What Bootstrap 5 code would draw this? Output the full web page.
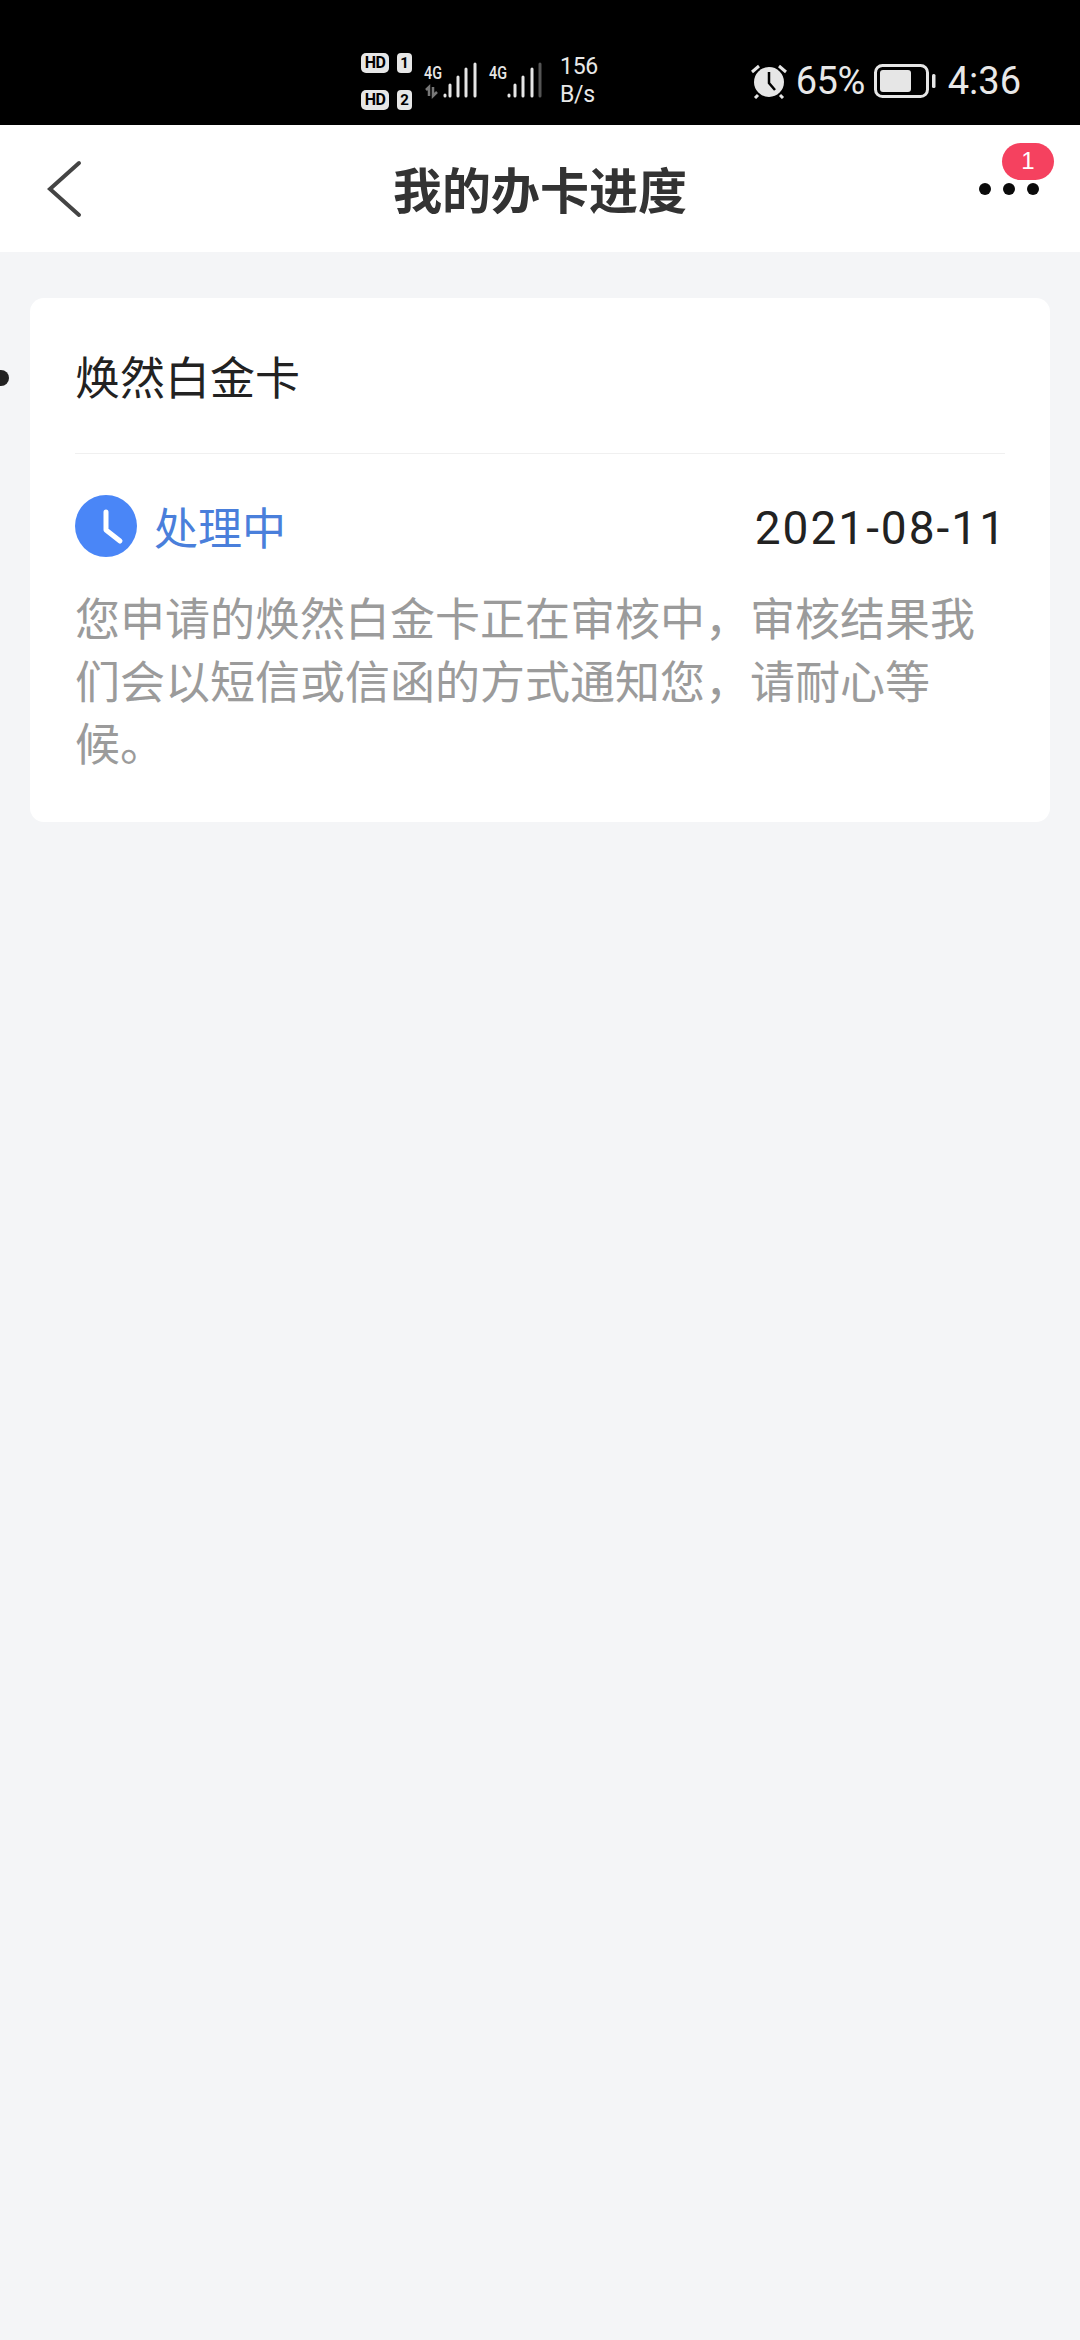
<!DOCTYPE html>
<html lang="zh-CN">
<head>
  <meta charset="UTF-8" />
  <title>我的办卡进度</title>
  <link href="https://cdn.jsdelivr.net/npm/bootstrap@5.3.3/dist/css/bootstrap.min.css" rel="stylesheet">
  <style>
    html, body { height: 100%; }
    body { background: #f4f5f7; font-family: "Noto Sans CJK SC", "Liberation Sans", sans-serif; overflow: hidden; position: relative; }
    .status-bar { height: 125px; background: #000; color: #e8e8e8; padding: 37px 59px 0 361px; font-family: "Roboto", "Liberation Sans", sans-serif; }
    .sim-col { width: 51px; height: 57px; }
    .hd-tag { width: 29px; height: 20px; background: #e6e6e6; color: #000; border-radius: 5px; font-size: 16px; font-weight: 700; line-height: 20px; text-align: center; letter-spacing: -.5px; }
    .sim-no { width: 15px; height: 20px; background: #e6e6e6; color: #000; border-radius: 4px; font-size: 15px; font-weight: 700; line-height: 20px; text-align: center; }
    .net-speed { font-size: 23px; line-height: 28px; width: 42px; margin-left: 10px; letter-spacing: -.3px; }
    .batt-pct { font-size: 38px; letter-spacing: -.5px; margin-left: 8px; margin-right: 9px; }
    .clock-txt { font-size: 38px; margin-left: 12px; }
    .head-bar { height: 127px; background: #fff; position: relative; }
    .head-title { font-size: 49px; font-weight: 700; color: #333; line-height: 1; margin-top: -2px; }
    .back-btn { position: absolute; left: 47px; top: 35px; }
    .more-dots { position: absolute; left: 979px; top: 58px; width: 60px; }
    .more-dots span { width: 12px; height: 12px; background: #0b0b0b; border-radius: 50%; }
    .msg-count { position: absolute; left: 1002px; top: 18px; width: 52px; height: 37px; background: #f5415f; color: #fff; border-radius: 19px; font-family: "Liberation Sans", sans-serif; font-size: 24px; line-height: 36px; text-align: center; }
    .side-dot { position: absolute; left: -7px; top: 370px; width: 16px; height: 16px; background: #222; border-radius: 50%; }
    .prog-card { margin: 46px 30px 0; background: #fff; border: 0; border-radius: 14px; height: 524px; padding: 0 45px; }
    .prog-name { height: 156px; border-bottom: 1px solid #f0f0f0; font-size: 45px; color: #222; line-height: 1; padding-top: 55px; }
    .prog-state { margin-top: 41px; height: 62px; }
    .state-txt { font-size: 44px; color: #4a7fdb; margin-left: 17px; line-height: 1; }
    .state-date { font-size: 46px; color: #222; line-height: 1; font-family: "Roboto", "Liberation Sans", sans-serif; letter-spacing: 2px; margin-right: -2px; padding-top: 3px; }
    .prog-desc { margin-top: 29px; font-size: 45px; line-height: 62.5px; color: #9b9b9b; margin-right: 10px; }
  </style>
</head>
<body>
  <div class="status-bar d-flex align-items-center">
    <div class="sim-col d-flex flex-column justify-content-between">
      <div class="d-flex gap-2"><div class="hd-tag">HD</div><div class="sim-no">1</div></div>
      <div class="d-flex gap-2"><div class="hd-tag">HD</div><div class="sim-no">2</div></div>
    </div>
    <svg width="130" height="40" viewBox="0 0 130 40" class="ms-2">
      <text x="4" y="18" font-family="Roboto, sans-serif" font-size="18" font-weight="500" fill="#e6e6e6" textLength="18" lengthAdjust="spacingAndGlyphs">4G</text>
      <text x="69" y="18" font-family="Roboto, sans-serif" font-size="18" font-weight="500" fill="#e6e6e6" textLength="18" lengthAdjust="spacingAndGlyphs">4G</text>
      <path d="M9 35V26l-3 3M13 26v9l4-4" fill="none" stroke="#777" stroke-width="2.5"/>
      <g stroke="#e6e6e6" stroke-width="3" stroke-linecap="round">
        <path d="M25 34v1M30 35V24M38 35V16M46 35V8M55 35V3"/>
        <path d="M89 34v1M95 35V24M103 35V16M112 35V8"/>
      </g>
      <path d="M120 35V3" stroke="#555" stroke-width="3" stroke-linecap="round"/>
    </svg>
    <div class="net-speed">156<br>B/s</div>
    <div class="ms-auto d-flex align-items-center">
      <svg width="38" height="36" viewBox="0 0 38 36">
        <circle cx="19" cy="19" r="15" fill="#e6e6e6"/>
        <path d="M19 9v11l6 7" fill="none" stroke="#000" stroke-width="2.5"/>
        <path d="M2 9l7-6M36 9l-7-6M8 32l-3 3M30 32l3 3" stroke="#e6e6e6" stroke-width="3"/>
      </svg>
      <div class="batt-pct">65%</div>
      <svg width="62" height="34" viewBox="0 0 62 34">
        <rect x="1.5" y="1.5" width="52" height="31" rx="7" fill="none" stroke="#e6e6e6" stroke-width="3"/>
        <rect x="6" y="6" width="31" height="22" rx="3" fill="#e6e6e6"/>
        <rect x="58" y="10" width="3.5" height="14" rx="1.5" fill="#e6e6e6"/>
      </svg>
      <div class="clock-txt">4:36</div>
    </div>
  </div>

  <div class="head-bar d-flex align-items-center justify-content-center">
    <svg class="back-btn" width="36" height="58" viewBox="0 0 36 58">
      <path d="M32 3L3 29l29 26" fill="none" stroke="#444" stroke-width="4" stroke-linecap="round" stroke-linejoin="miter"/>
    </svg>
    <div class="head-title">我的办卡进度</div>
    <div class="more-dots d-flex justify-content-between"><span></span><span></span><span></span></div>
    <div class="msg-count">1</div>
  </div>

  <div class="side-dot"></div>

  <div class="card prog-card">
    <div class="prog-name">焕然白金卡</div>
    <div class="prog-state d-flex align-items-center justify-content-between">
      <div class="d-flex align-items-center">
        <svg width="62" height="62" viewBox="0 0 62 62">
          <circle cx="31" cy="31" r="31" fill="#4a86f7"/>
          <path d="M31 17v18l14 11" fill="none" stroke="#fff" stroke-width="5" stroke-linecap="round" stroke-linejoin="round"/>
        </svg>
        <div class="state-txt">处理中</div>
      </div>
      <div class="state-date">2021-08-11</div>
    </div>
    <div class="prog-desc">您申请的焕然白金卡正在审核中，审核结果我们会以短信或信函的方式通知您，请耐心等候。</div>
  </div>

  <script src="https://cdn.jsdelivr.net/npm/bootstrap@5.3.3/dist/js/bootstrap.bundle.min.js"></script>
</body>
</html>
